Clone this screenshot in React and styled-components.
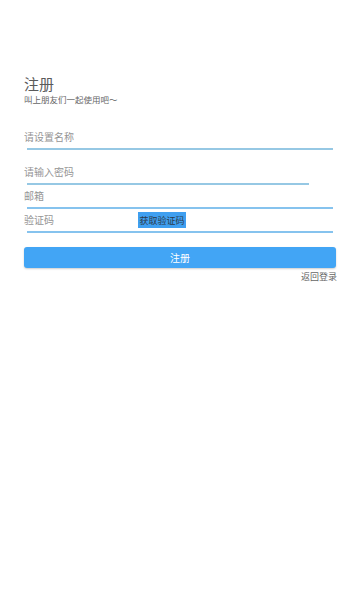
import styled, { createGlobalStyle } from 'styled-components';

const GlobalStyle = createGlobalStyle`
    html, body {
        margin: 0;
        padding: 0;
        background: #ffffff;
    }
    body {
        font-family: Roboto, "Noto Sans CJK SC", sans-serif;
    }
`;

const Page = styled.div`
    width: 360px;
    min-height: 600px;
    box-sizing: border-box;
    padding: 76px 24px 0 24px;
    background: #fff;
`;

const Title = styled.h1`
    margin: 0;
    font-size: 15px;
    line-height: 18px;
    font-weight: 400;
    color: #5a5a5a;
`;

const Subtitle = styled.div`
    font-size: 8.5px;
    line-height: 12px;
    color: #666;
    margin-bottom: 20px;
`;

const Field = styled.div`
    margin-top: ${(p) => p.$gap || 0}px;
`;

const InputRow = styled.div`
    height: 22px;
    display: flex;
    align-items: center;
`;

const Input = styled.input`
    flex: ${(p) => (p.$width ? 'none' : '1')};
    width: ${(p) => (p.$width ? `${p.$width}px` : 'auto')};
    min-width: 0;
    border: none;
    outline: none;
    padding: 0;
    background: transparent;
    font-family: inherit;
    font-size: 10px;
    color: #333;

    &::placeholder {
        color: #959595;
    }
`;

const Underline = styled.div`
    height: 2px;
    margin: 0 ${(p) => (p.$short ? 27 : 3)}px 0 3px;
    background: ${(p) => (p.$light ? '#96c8e4' : '#86c3ee')};
`;

const CodeButton = styled.button`
    height: 16px;
    width: 48px;
    padding: 0;
    border: none;
    background: #3f9ff0;
    color: #2b3a4a;
    font-family: inherit;
    font-size: 9px;
    cursor: pointer;
`;

const SubmitButton = styled.button`
    display: block;
    width: 100%;
    height: 21px;
    margin-top: 14px;
    border: none;
    border-radius: 3px;
    background: #42a5f5;
    box-shadow: 0 1px 2px rgba(0, 0, 0, 0.2);
    color: #fff;
    font-family: inherit;
    font-size: 10px;
    cursor: pointer;
`;

const BackLink = styled.div`
    text-align: right;
    margin: 3px -1px 0 0;
    font-size: 9px;
    line-height: 12px;
    color: #666;
`;

const App = () => {
    return (
        <Page>
            <GlobalStyle />
            <Title>注册</Title>
            <Subtitle>叫上朋友们一起使用吧～</Subtitle>

            <Field>
                <InputRow>
                    <Input placeholder="请设置名称" />
                </InputRow>
                <Underline $light />
            </Field>

            <Field $gap={11}>
                <InputRow>
                    <Input type="password" placeholder="请输入密码" />
                </InputRow>
                <Underline $light $short />
            </Field>

            <Field>
                <InputRow>
                    <Input placeholder="邮箱" />
                </InputRow>
                <Underline />
            </Field>

            <Field>
                <InputRow>
                    <Input $width={114} placeholder="验证码" />
                    <CodeButton>获取验证码</CodeButton>
                </InputRow>
                <Underline />
            </Field>

            <SubmitButton>注册</SubmitButton>
            <BackLink>返回登录</BackLink>
        </Page>
    );
};

export default App;
